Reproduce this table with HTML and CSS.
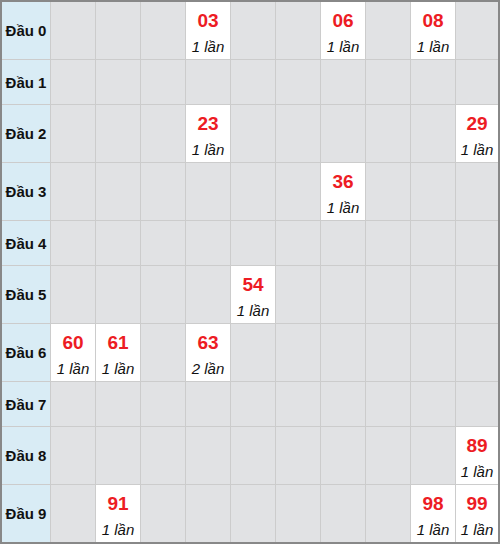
FILE: index.html
```html
<!DOCTYPE html>
<html>
<head>
<meta charset="utf-8">
<link rel="stylesheet" href="styles.css">
</head>
<body>
<div class="board">
  <div class="head">Đầu 0</div>
  <div class="c"></div><div class="c"></div><div class="c"></div>
  <div class="c hit"><span class="num">03</span><span class="cnt">1 lần</span></div>
  <div class="c"></div><div class="c"></div>
  <div class="c hit"><span class="num">06</span><span class="cnt">1 lần</span></div>
  <div class="c"></div>
  <div class="c hit"><span class="num">08</span><span class="cnt">1 lần</span></div>
  <div class="c"></div>

  <div class="head">Đầu 1</div>
  <div class="c"></div><div class="c"></div><div class="c"></div><div class="c"></div><div class="c"></div>
  <div class="c"></div><div class="c"></div><div class="c"></div><div class="c"></div><div class="c"></div>

  <div class="head">Đầu 2</div>
  <div class="c"></div><div class="c"></div><div class="c"></div>
  <div class="c hit"><span class="num">23</span><span class="cnt">1 lần</span></div>
  <div class="c"></div><div class="c"></div><div class="c"></div><div class="c"></div><div class="c"></div>
  <div class="c hit"><span class="num">29</span><span class="cnt">1 lần</span></div>

  <div class="head">Đầu 3</div>
  <div class="c"></div><div class="c"></div><div class="c"></div><div class="c"></div><div class="c"></div><div class="c"></div>
  <div class="c hit"><span class="num">36</span><span class="cnt">1 lần</span></div>
  <div class="c"></div><div class="c"></div><div class="c"></div>

  <div class="head">Đầu 4</div>
  <div class="c"></div><div class="c"></div><div class="c"></div><div class="c"></div><div class="c"></div>
  <div class="c"></div><div class="c"></div><div class="c"></div><div class="c"></div><div class="c"></div>

  <div class="head">Đầu 5</div>
  <div class="c"></div><div class="c"></div><div class="c"></div><div class="c"></div>
  <div class="c hit"><span class="num">54</span><span class="cnt">1 lần</span></div>
  <div class="c"></div><div class="c"></div><div class="c"></div><div class="c"></div><div class="c"></div>

  <div class="head">Đầu 6</div>
  <div class="c hit"><span class="num">60</span><span class="cnt">1 lần</span></div>
  <div class="c hit"><span class="num">61</span><span class="cnt">1 lần</span></div>
  <div class="c"></div>
  <div class="c hit"><span class="num">63</span><span class="cnt">2 lần</span></div>
  <div class="c"></div><div class="c"></div><div class="c"></div><div class="c"></div><div class="c"></div><div class="c"></div>

  <div class="head">Đầu 7</div>
  <div class="c"></div><div class="c"></div><div class="c"></div><div class="c"></div><div class="c"></div>
  <div class="c"></div><div class="c"></div><div class="c"></div><div class="c"></div><div class="c"></div>

  <div class="head">Đầu 8</div>
  <div class="c"></div><div class="c"></div><div class="c"></div><div class="c"></div><div class="c"></div>
  <div class="c"></div><div class="c"></div><div class="c"></div><div class="c"></div>
  <div class="c hit"><span class="num">89</span><span class="cnt">1 lần</span></div>

  <div class="head">Đầu 9</div>
  <div class="c"></div>
  <div class="c hit"><span class="num">91</span><span class="cnt">1 lần</span></div>
  <div class="c"></div><div class="c"></div><div class="c"></div><div class="c"></div><div class="c"></div><div class="c"></div>
  <div class="c hit"><span class="num">98</span><span class="cnt">1 lần</span></div>
  <div class="c hit"><span class="num">99</span><span class="cnt">1 lần</span></div>
</div>
</body>
</html>
```

FILE: styles.css
```css
html, body {
  margin: 0;
  padding: 0;
  background: #ffffff;
}
body {
  font-family: "Liberation Sans", Arial, sans-serif;
}
.board {
  width: 496px;
  border: 2px solid #888888;
  background: #cccccc;
  display: grid;
  grid-template-columns: 48px repeat(9, 44px) 42px;
  grid-template-rows: 57px 44px 57px 57px 44px 57px 57px 44px 57px 57px;
  gap: 1px;
}
.head {
  background: #d9ecf5;
  font-weight: bold;
  font-size: 15px;
  color: #111111;
  display: flex;
  align-items: center;
  justify-content: center;
}
.c {
  background: #e1e2e4;
}
.c.hit {
  background: #ffffff;
  display: flex;
  flex-direction: column;
  align-items: center;
  padding-top: 6px;
  box-sizing: border-box;
}
.num {
  color: #ed1c24;
  font-weight: bold;
  font-size: 19px;
  line-height: 25px;
}
.cnt {
  color: #111111;
  font-style: italic;
  font-size: 15px;
  line-height: 27px;
}
```
